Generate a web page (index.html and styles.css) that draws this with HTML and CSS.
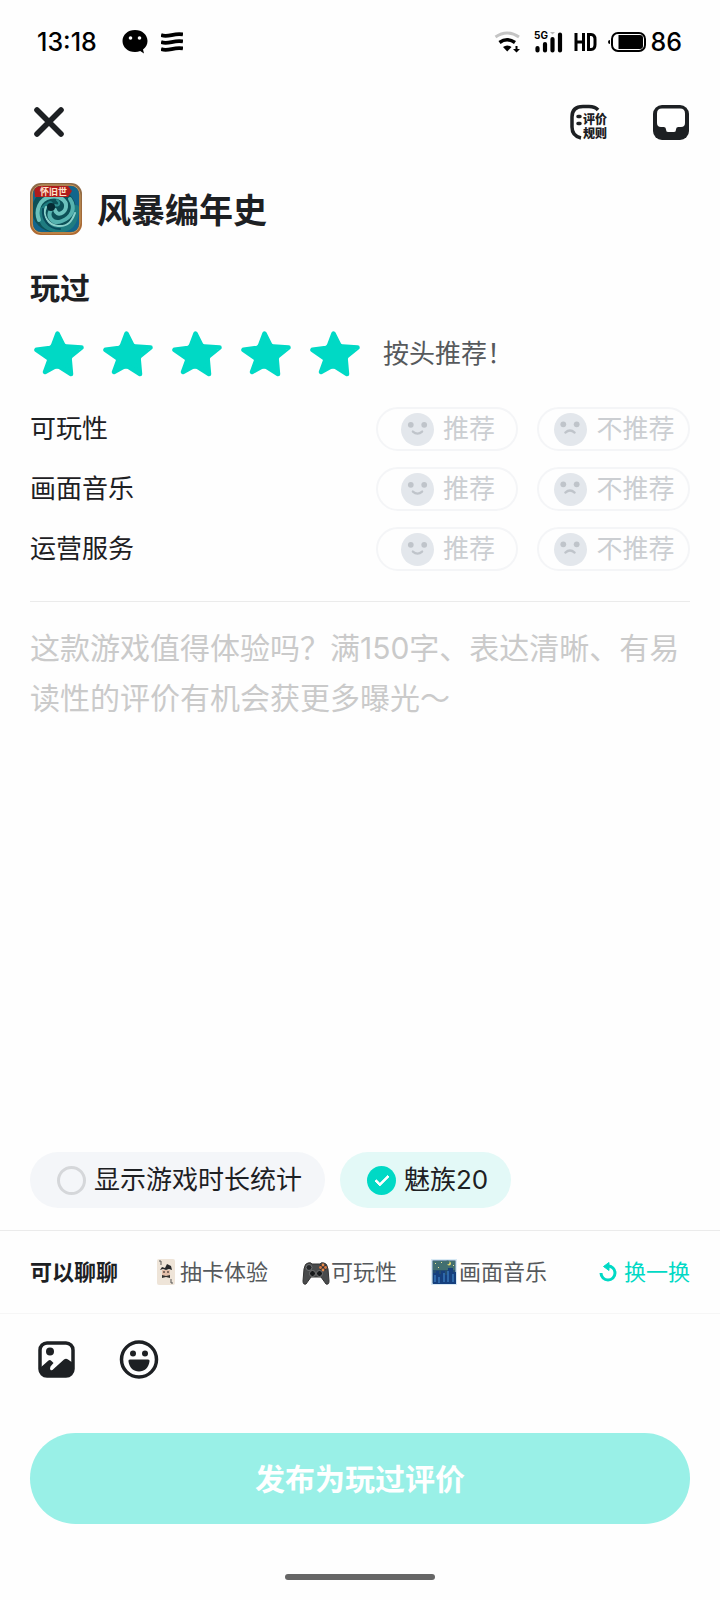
FILE: index.html
```html
<!DOCTYPE html>
<html lang="zh-CN">
<head>
    <meta charset="UTF-8">
    <meta name="viewport" content="width=device-width, initial-scale=1">
    <title>风暴编年史 - 评价</title>
    <link rel="stylesheet" href="styles.css">
</head>
<body>

<!-- shared icons -->
<svg class="sprite" aria-hidden="true">
    <symbol id="star" viewBox="0 0 50 46">
        <path d="M23.500 2.500L29 13.500Q30 15.500 32.500 15.500L47.500 16.500L37 25Q35.500 26.500 35.700 28.500L37 43L26 36Q23 34.800 20 36L11 41L15 30Q15.500 28 14 27L2.500 18.800L16 17Q18 16.500 19 14.500Z" fill="#00d9c5" stroke="#00d9c5" stroke-width="4.500" stroke-linejoin="round"/>
    </symbol>
    <symbol id="smile" viewBox="0 0 32 32">
        <circle cx="16" cy="16" r="16" fill="#e3e7ec"/>
        <circle cx="9.500" cy="11.500" r="2.800" fill="#bfc4ca"/>
        <circle cx="22.500" cy="11.500" r="2.800" fill="#bfc4ca"/>
        <path d="M11.500 18 Q16 22 20.500 18" fill="none" stroke="#bfc4ca" stroke-width="2.200" stroke-linecap="round"/>
    </symbol>
    <symbol id="sad" viewBox="0 0 32 32">
        <circle cx="16" cy="16" r="16" fill="#e3e7ec"/>
        <circle cx="9" cy="11" r="2.800" fill="#bfc4ca"/>
        <circle cx="22" cy="11" r="2.800" fill="#bfc4ca"/>
        <path d="M11 19 Q15.500 15 20 19" fill="none" stroke="#bfc4ca" stroke-width="2.200" stroke-linecap="round"/>
    </symbol>
</svg>

<div class="page">
    <div class="statusbar">
        <span class="clock">13:18</span>
        <svg class="chat" width="26" height="24" viewBox="0 0 26 24">
            <path d="M13 0C5.800 0 .5 4.800.5 11S5.800 22 13 22c1.900 0 3.700-.3 5.200-.9L22 23.500 21 19.500c2.900-2 4.500-5 4.500-8.500C25.500 4.800 20.200 0 13 0Z"/>
            <circle cx="8.500" cy="8" r="1.800" fill="#fff"/>
            <circle cx="17.500" cy="8" r="1.800" fill="#fff"/>
        </svg>
        <svg width="22" height="20" viewBox="0 0 22 20" fill="none" stroke="#000" stroke-width="3.800">
            <path d="M0 3 C7 6 13 .5 22 2.500M0 10 C7 13 13 7.500 22 9.500M0 17 C7 20 13 14.500 22 16.500"/>
        </svg>
        <div class="status_right">
            <svg width="28" height="22" viewBox="0 0 28 22" fill="none">
                <path d="M1.500 6 Q13 -2 25 6" stroke="#c4c4c4" stroke-width="3"/>
                <path d="M5.500 11.500 Q13 6 21 11.500" stroke="#000" stroke-width="3.500"/>
                <path d="M9 16 Q13 13 17.500 16 L13.200 20.500Z" fill="#000"/>
                <path d="M21.500 15h2v3h2.500l-3.500 3.500-3.500-3.500h2.500Z" fill="#000"/>
            </svg>
            <svg width="32" height="26" viewBox="-2 -2 32 26">
                <text x="0" y="8" class="net">5G</text>
                <path d="M3.500 17v2.500M11 13v6.500M18.500 8v11.500M26 3.500v16" stroke="#000" stroke-width="4.200" stroke-linecap="round"/>
                <path d="M16 1h5l-2.500 2.500Z" fill="#bbb"/>
            </svg>
            <svg width="24" height="20" viewBox="0 0 24 20" fill="none" stroke="#000" stroke-width="3">
                <path d="M2 1v18M9.500 1v18M2 10h7.500M14.500 2.500v15h2.500c3 0 4-2 4-5v-5c0-3-1-5-4-5Z"/>
            </svg>
            <svg width="38" height="20" viewBox="0 0 38 20">
                <path d="M0 10q0-2 2-2v4q-2 0-2-2Z"/>
                <rect x="4" y="1" width="33" height="18" rx="6" fill="none" stroke="#000" stroke-width="2"/>
                <path d="M10.500 3H32q3 0 3 3v8q0 3-3 3H10.500Z"/>
            </svg>
            <span class="battery">86</span>
        </div>
    </div>

    <header class="topbar">
        <button class="icon_btn" aria-label="关闭">
            <svg width="38" height="38" viewBox="0 0 38 38" stroke="#1d2023" stroke-width="5.600" stroke-linecap="round">
                <path d="M7 7L31 31M31 7L7 31"/>
            </svg>
        </button>
        <div class="topbar_right">
            <button class="icon_btn" aria-label="评价规则">
                <svg width="40" height="38" viewBox="0 0 40 38">
                    <path d="M29 7Q26 3.500 20 3.500H14Q3 3.500 3 14V24Q3 33 12 35" fill="none" stroke="#1d2023" stroke-width="3.500"/>
                    <path d="M9 13.500h2M9 20.500h2" stroke="#1d2023" stroke-width="3.500" stroke-linecap="round"/>
                    <text x="14" y="21" class="rule_text">评价</text>
                    <text x="14" y="35" class="rule_text">规则</text>
                </svg>
            </button>
            <button class="icon_btn" aria-label="草稿箱">
                <svg width="38" height="38" viewBox="0 0 38 38">
                    <rect x="1" y="2" width="36" height="35" rx="9" fill="#1d2023"/>
                    <path d="M10 5.500H28Q33 5.500 33 10.500V20Q33 24 29 24H26Q24 24 24 26.500Q24 29 22 29H16Q14 29 14 26.500Q14 24 12 24H9Q5 24 5 20V10.500Q5 5.500 10 5.500Z" fill="#fff"/>
                </svg>
            </button>
        </div>
    </header>

    <main class="content">
        <div class="game">
            <svg class="game_icon" width="52" height="52" viewBox="0 0 52 52" aria-hidden="true">
                <defs>
                    <clipPath id="art"><rect x="3" y="3" width="46" height="46" rx="8"/></clipPath>
                    <linearGradient id="frame" x1="0" y1="0" x2="0" y2="1">
                        <stop offset="0" stop-color="#8b6a48"/>
                        <stop offset="1" stop-color="#b06a30"/>
                    </linearGradient>
                </defs>
                <rect width="52" height="52" rx="11" fill="url(#frame)"/>
                <rect x="2" y="2" width="48" height="48" rx="10" fill="none" stroke="#c99a5c"/>
                <g clip-path="url(#art)">
                    <rect width="52" height="52" fill="#12668c"/>
                    <circle cx="24" cy="27" r="22" fill="#0d5158"/>
                    <g fill="none" stroke-linecap="round">
                        <path d="M20 21C8 26 8 43 24 46S46 39 46 25" stroke="#1f7c80" stroke-width="6"/>
                        <path d="M21 27C17 33 22 42 32 38S46 25 40 16" stroke="#56b3b0" stroke-width="4"/>
                        <path d="M25 27C27 34 35 30 36 24S30 12 20 14 5 27 9 37" stroke="#6cc2bd" stroke-width="4"/>
                        <path d="M16 24C12 32 18 42 28 43S42 38 45 30" stroke="#8ad0ca" stroke-width="2"/>
                        <path d="M13 26C12 36 18 46 30 46" stroke="#094b5b" stroke-width="2"/>
                        <path d="M25 22C29 24 31 20 27 17" stroke="#2f8f90" stroke-width="2"/>
                    </g>
                    <circle cx="21" cy="24" r="4" fill="#062a33"/>
                    <path d="M4 3H38L42 8 38 14H5Z" fill="#b01c1c"/>
                    <text x="10" y="12" class="game_tag">怀旧世</text>
                </g>
            </svg>
            <h1>风暴编年史</h1>
        </div>

        <h2>玩过</h2>

        <div class="rating">
            <div class="stars">
                <button class="star" aria-label="1星"><svg><use href="#star"/></svg></button>
                <button class="star" aria-label="2星"><svg><use href="#star"/></svg></button>
                <button class="star" aria-label="3星"><svg><use href="#star"/></svg></button>
                <button class="star" aria-label="4星"><svg><use href="#star"/></svg></button>
                <button class="star" aria-label="5星"><svg><use href="#star"/></svg></button>
            </div>
            <span class="rating_text">按头推荐！</span>
        </div>

        <div class="aspects">
            <div class="aspect">
                <span class="aspect_name">可玩性</span>
                <button class="vote vote_up"><svg><use href="#smile"/></svg>推荐</button>
                <button class="vote vote_down"><svg><use href="#sad"/></svg>不推荐</button>
            </div>
            <div class="aspect">
                <span class="aspect_name">画面音乐</span>
                <button class="vote vote_up"><svg><use href="#smile"/></svg>推荐</button>
                <button class="vote vote_down"><svg><use href="#sad"/></svg>不推荐</button>
            </div>
            <div class="aspect">
                <span class="aspect_name">运营服务</span>
                <button class="vote vote_up"><svg><use href="#smile"/></svg>推荐</button>
                <button class="vote vote_down"><svg><use href="#sad"/></svg>不推荐</button>
            </div>
        </div>

        <textarea class="review" aria-label="评价内容" placeholder="这款游戏值得体验吗？满150字、表达清晰、有易读性的评价有机会获更多曝光～"></textarea>

        <div class="options">
            <label class="option" for="show_time">
                <input type="checkbox" id="show_time">
                显示游戏时长统计
            </label>
            <label class="option option_on" for="show_device">
                <input type="checkbox" id="show_device" checked>
                魅族20
            </label>
        </div>
    </main>

    <div class="topics">
        <strong>可以聊聊</strong>
        <button class="topic topic_card">
            <svg width="18" height="28" viewBox="0 0 18 28">
                <rect y="1" width="18" height="26" rx="2" fill="#eee4d8"/>
                <path d="M2 3h2v4M14 21v4h2" fill="none" stroke="#555" stroke-width="1"/>
                <path d="M3 12l2-3 3 1 2-4 4 2 1 4-3-1-3 1-3-1Z" fill="#26282b"/>
                <path d="M5 12h8v5q-4 3-8 0Z" fill="#e4bfa9"/>
                <path d="M5 17l4 1 4-1v3l-4-1-4 1Z" fill="#35322f"/>
                <circle cx="7" cy="14" r=".8"/><circle cx="11" cy="14" r=".8"/>
            </svg>
            抽卡体验
        </button>
        <button class="topic topic_pad">
            <svg width="28" height="28" viewBox="0 0 28 28">
                <path d="M6 5Q3 5 2 11L1 23Q1 27 4 26L9 19H19L24 26Q27 27 27 23L26 11Q25 5 22 5Q19 4 18 6H10Q9 4 6 5Z" fill="#494b4c" stroke="#333"/>
                <circle cx="7" cy="9.500" r="3" fill="#24272a" stroke="#727476"/>
                <circle cx="21" cy="9.500" r="3.500" fill="#303234"/>
                <circle cx="21" cy="7" r="1.400" fill="#e88b4b"/><circle cx="21" cy="12" r="1.400" fill="#e88b4b"/>
                <circle cx="18.500" cy="9.500" r="1.400" fill="#d87842"/><circle cx="23.500" cy="9.500" r="1.400" fill="#d87842"/>
                <circle cx="10.500" cy="15.500" r="3" fill="#17191b" stroke="#777"/>
                <circle cx="17.500" cy="15.500" r="3" fill="#17191b" stroke="#777"/>
            </svg>可玩性
        </button>
        <button class="topic topic_art">
            <svg width="26" height="26" viewBox="0 0 26 26">
                <rect width="26" height="26" fill="#d8e9f4"/>
                <rect x="1.500" y="1.500" width="23" height="23" fill="#244e72"/>
                <path d="M2 2H24V11H2Z" fill="#426f70"/>
                <path d="M2 14h3v-2h3v3h2v-3h4v4h3V9h5v4h3v12H2Z" fill="#16407e"/>
                <path d="M4 16v7M8 18v6M13 14v9M17 12v11M22 15v8" stroke="#3775b8" stroke-width="1.500"/>
                <circle cx="18" cy="4.500" r="2" fill="#eadb70"/><circle cx="16.500" cy="3.500" r="2" fill="#426f70"/>
                <path d="M4 4h1v1H4zM10 3h1v1h-1zM7 8h1v1H7zM22 6h1v1h-1z" fill="#e9e49b"/>
            </svg>画面音乐
        </button>
        <button class="topic refresh">
            <svg width="18" height="20" viewBox="0 0 18 20">
                <path d="M2 11a7 7 0 1 0 7-7" fill="none" stroke="#00d9c5" stroke-width="3"/>
                <path d="M4.500 4.500L10 .5V8.500Z" fill="#00d9c5" stroke="#00d9c5" stroke-linejoin="round"/>
            </svg>
            换一换
        </button>
    </div>

    <div class="tools">
        <button class="icon_btn" aria-label="图片">
            <svg width="40" height="40" viewBox="0 0 40 40">
                <rect x="3" y="3" width="33" height="33" rx="7" fill="none" stroke="#1d2023" stroke-width="3.500"/>
                <circle cx="13" cy="11.500" r="4" fill="#1d2023"/>
                <path d="M3 28L11.500 20.500Q13 19.500 14.500 21L16.500 23 13.500 26.500Q12.500 28.500 13.500 30 15 31 16.500 29L27 19.500Q29 18 31 19.500L36 23V29Q36 36 29 36H10Q3 36 3 29Z" fill="#1d2023"/>
            </svg>
        </button>
        <button class="icon_btn" aria-label="表情">
            <svg width="40" height="40" viewBox="0 0 40 40">
                <circle cx="20" cy="19.500" r="17.500" fill="none" stroke="#1d2023" stroke-width="3.500"/>
                <circle cx="14" cy="13.500" r="3" fill="#1d2023"/><circle cx="26" cy="13.500" r="3" fill="#1d2023"/>
                <path d="M11 19.500H29Q31 19.500 30.500 21.500C29.500 28 25.500 31.500 20 31.500S10.500 28 9.500 21.500Q9 19.500 11 19.500Z" fill="#1d2023"/>
            </svg>
        </button>
    </div>

    <button class="publish">发布为玩过评价</button>
    <div class="home_bar"></div>
</div>
</body>
</html>
```
FILE: styles.css
```css
* {
    box-sizing: border-box;
}

body {
    margin: 0;
    background: #fefefe;
    color: #1d2023;
    font-family: Inter, "Noto Sans CJK SC", sans-serif;
    font-size: 26px;
    line-height: 40px;
}

button {
    margin: 0;
    padding: 0;
    border: 0;
    background: none;
    color: inherit;
    font: inherit;
    cursor: pointer;
}

svg {
    display: block;
    flex: none;
}

.sprite {
    position: absolute;
    width: 0;
    height: 0;
}

.page {
    display: flex;
    flex-direction: column;
    min-height: 100vh;
}

/* status bar */
.statusbar {
    display: flex;
    align-items: center;
    height: 84px;
    padding: 0 38px 0 37px;
    color: #000;
    gap: 13px;
}

.clock {
    font-weight: 500;
    font-size: 25px;
}

.chat {
    margin-left: 12px;
}

.status_right {
    display: flex;
    align-items: center;
    gap: 10px;
    margin-left: auto;
}

.battery {
    margin-left: -5px;
    font-size: 25px;
    font-weight: 500;
}

.net {
    font: bold 10px Inter, sans-serif;
}

/* top bar */
.topbar {
    display: flex;
    align-items: center;
    justify-content: space-between;
    height: 76px;
    padding: 0 30px;
}

.topbar_right {
    display: flex;
    gap: 43px;
}

.rule_text {
    font: 900 12px "Noto Sans CJK SC", sans-serif;
    fill: #1d2023;
}

.content {
    display: flex;
    flex-direction: column;
    flex: 1;
    padding: 23px 30px 22px;
}

.game {
    display: flex;
    align-items: center;
    gap: 15px;
}

.game_tag {
    font: bold 9px "Noto Sans CJK SC", sans-serif;
    fill: #ffe2cc;
}

h1 {
    margin: 0;
    font-family: "Noto Sans CJK SC", sans-serif;
    font-size: 34px;
    line-height: 50px;
}

h2 {
    margin: 33px 0 23px;
    font-size: 30px;
    line-height: 40px;
}

/* rating */
.rating {
    display: flex;
    align-items: center;
    padding-left: 4px;
    gap: 23px;
}

.stars {
    display: flex;
    gap: 19px;
}

.star svg {
    width: 50px;
    height: 46px;
}

.rating_text {
    color: #56595c;
}

.aspects {
    display: flex;
    flex-direction: column;
    gap: 16px;
    padding: 30px 0;
    border-bottom: 1px solid #ebebeb;
}

.aspect {
    display: flex;
    align-items: center;
}

.aspect_name {
    flex: 1;
}

.vote {
    display: flex;
    align-items: center;
    justify-content: center;
    gap: 9px;
    height: 44px;
    padding-left: 2px;
    border: 2px solid #f4f5f7;
    border-radius: 22px;
    color: #cbced2;
}

.vote svg {
    width: 33px;
    height: 33px;
}

.vote_up {
    width: 142px;
    margin-right: 19px;
}

.vote_down {
    width: 153px;
}

/* review text */
.review {
    flex: 1;
    width: 100%;
    min-height: 200px;
    padding: 21px 0 0;
    border: 0;
    outline: 0;
    resize: none;
    background: none;
    color: inherit;
    font: inherit;
    font-size: 30px;
    line-height: 50px;
}

.review::placeholder {
    color: #cacaca;
}

.options {
    display: flex;
    gap: 15px;
}

.option {
    display: flex;
    align-items: center;
    gap: 8px;
    height: 56px;
    padding: 0 23px 0 27px;
    border-radius: 28px;
    background: #f4f6f9;
    cursor: pointer;
}

.option_on {
    background: #e3f9f7;
}

.option input {
    appearance: none;
    width: 29px;
    height: 29px;
    margin: 0;
    border: 3px solid #d5d7da;
    border-radius: 50%;
}

.option input:checked {
    display: flex;
    border: 0;
    background: #00d9c5;
}

/* tick */
.option input:checked::before {
    content: "";
    box-sizing: border-box;
    width: 14px;
    height: 8px;
    margin: 9px auto 0;
    border: solid #fff;
    border-width: 0 0 3px 3px;
    border-radius: 1px;
    transform: rotate(-45deg);
}

/* topics */
.topics {
    display: flex;
    align-items: center;
    height: 84px;
    padding: 0 30px;
    border-top: 1px solid #ebebeb;
    border-bottom: 1px solid #f6f6f6;
    font-size: 22px;
    white-space: nowrap;
}

.topic {
    display: flex;
    align-items: center;
    color: #56595c;
}

.topic_card {
    gap: 5px;
    margin-left: 39px;
}

.topic_pad {
    gap: 1px;
    margin-left: 34px;
}

.topic_art {
    gap: 2px;
    margin-left: 34px;
}

.refresh {
    gap: 7px;
    margin-left: auto;
    color: #00d9c5;
}

.tools {
    display: flex;
    align-items: center;
    gap: 42px;
    height: 92px;
    padding: 0 37px;
}

.publish {
    height: 91px;
    margin: 27px 30px 50px;
    border-radius: 46px;
    background: #99f0e7;
    color: #fff;
    font-size: 30px;
    font-weight: bold;
}

.home_bar {
    width: 150px;
    height: 6px;
    margin: 0 auto 20px;
    border-radius: 3px;
    background: #666;
}
```
